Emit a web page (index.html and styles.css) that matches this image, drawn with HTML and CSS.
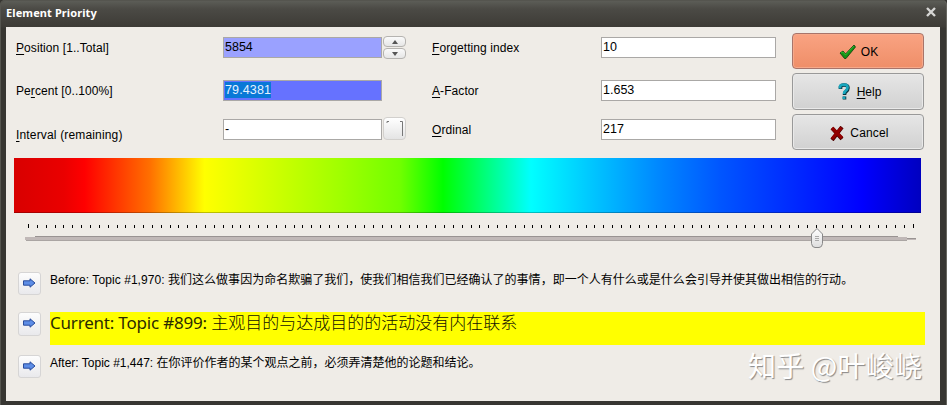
FILE: index.html
```html
<!DOCTYPE html>
<html lang="zh">
<head>
<meta charset="utf-8">
<title>Element Priority</title>
<link rel="stylesheet" href="styles.css">
</head>
<body>
<div class="window">
  <header class="titlebar">
    <span class="title">Element Priority</span>
    <svg class="close" width="12" height="12" viewBox="0 0 12 12"><path d="M2 2L10 10M10 2L2 10" stroke="#d6d6d4" stroke-width="2.4"/></svg>
  </header>
  <main class="content">
    <section class="form">
      <div class="column left">
        <div class="row"><label><u>P</u>osition [1..Total]</label><div class="field position">5854</div>
          <div class="spin"><span><svg width="8" height="4"><path d="M1 4L4 0L7 4Z" fill="#555"/></svg></span><span><svg width="8" height="4"><path d="M1 0L4 4L7 0Z" fill="#555"/></svg></span></div></div>
        <div class="row"><label>Pe<u>r</u>cent [0..100%]</label><div class="field percent"><mark>79.4381</mark></div></div>
        <div class="row"><label class="low"><u>I</u>nterval (remaining)</label><div class="field dash">-</div>
          <div class="pick"><svg width="24" height="24"><path d="M4 6V4.500H6M17 4.500H19.500V19" fill="none" stroke="#777"/></svg></div></div>
      </div>
      <div class="column right">
        <div class="row"><label><u>F</u>orgetting index</label><div class="field">10</div></div>
        <div class="row"><label><u>A</u>-Factor</label><div class="field">1.653</div></div>
        <div class="row"><label><u>O</u>rdinal</label><div class="field">217</div></div>
      </div>
      <div class="actions">
        <button class="btn ok"><svg width="17" height="16" viewBox="0 0 17 16"><path d="M1 9L4 7L6.500 10L15 1L16.500 3L7 14.500H5.500Z" fill="#159015" stroke="#0b3d0b" stroke-width=".8"/><path d="M2 8.800L4 8L6.500 11L15 2" fill="none" stroke="#2cba2c"/></svg><span>OK</span></button>
        <button class="btn help"><svg width="12" height="17" viewBox="0 0 12 17"><path d="M2.500 6V4Q3 2 6 2Q10 2 10 5Q10 7 8 8.500Q6.500 9.500 6.500 12M6.500 13.500V16.500" fill="none" stroke="#08333f" stroke-width="3.600"/><path d="M2 5.500V3.500Q2.500 1.700 6 1.700Q9.500 1.700 9.500 4.500Q9.500 6.500 7.500 8Q6 9 6 11M6 13.500V16" fill="none" stroke="#19a6bd" stroke-width="2.800"/></svg><span><u>H</u>elp</span></button>
        <button class="btn cancel"><svg width="14" height="15" viewBox="0 0 14 15"><path d="M2 2L12 13M12 1L2 14" stroke="#4d0000" stroke-width="4"/><path d="M2 2L12 12M11.500 1.500L2 13" stroke="#920000" stroke-width="3.200"/></svg><span>Cancel</span></button>
      </div>
    </section>
    <div class="spectrum"></div>
    <div class="slider">
      <svg width="907" height="28" viewBox="14 222 907 28">
        <defs><linearGradient id="thumb" x2="0" y2="1"><stop stop-color="#fff"/><stop offset="1" stop-color="#ddd"/></linearGradient></defs>
        <g shape-rendering="crispEdges">
          <path d="M28 226.500H914" stroke="#000" stroke-width="3" stroke-dasharray="1 7.850"/>
          <path d="M28 224h1v4h-1zM913 224h1v4h-1z"/>
          <path d="M25 237h10v-1h863v1h9v1h9v2h-9v1h-872v-1h-10z" fill="#c0b8b7"/>
          <path d="M35 236.500H898M907 238.500H916" stroke="#999392"/>
          <path d="M26 240.500H907" stroke="#aaa5a3"/>
        </g>
        <path d="M817 228.500L822.500 234V243.500Q822 247.500 819 247.500H815Q812 247.500 811.500 243.500V234Z" fill="url(#thumb)" stroke="#888"/>
        <path d="M815 236.500h4M815 238.500h4M815 240.500h4" stroke="#aaa"/>
      </svg>
    </div>
    <section class="topics">
      <div class="topic before"><button class="go"><svg class="arrow" width="13" height="10" viewBox="0 0 13 10"><path d="M.5 2.800H7V.8L12 5L7 9.200V7.200H.5Z" fill="#5d8de6" stroke="#294c9c"/></svg></button><p><span>Before: Topic #1,970:</span> <b class="cjk">我们这么做事因为命名欺骗了我们，使我们相信我们已经确认了的事情，即一个人有什么或是什么会引导并使其做出相信的行动。</b></p></div>
      <div class="topic current"><button class="go"><svg class="arrow" width="13" height="10" viewBox="0 0 13 10"><path d="M.5 2.800H7V.8L12 5L7 9.200V7.200H.5Z" fill="#5d8de6" stroke="#294c9c"/></svg></button><p><span>Current: Topic #899:</span> <b class="cjk">主观目的与达成目的的活动没有内在联系</b></p></div>
      <div class="topic after"><button class="go"><svg class="arrow" width="13" height="10" viewBox="0 0 13 10"><path d="M.5 2.800H7V.8L12 5L7 9.200V7.200H.5Z" fill="#5d8de6" stroke="#294c9c"/></svg></button><p><span>After: Topic #1,447:</span> <b class="cjk">在你评价作者的某个观点之前，必须弄清楚他的论题和结论。</b></p></div>
    </section>
    <div class="watermark">知乎 @叶峻峣</div>
  </main>
</div>
</body>
</html>
```

FILE: styles.css
```css
* { box-sizing: border-box; }
body { margin: 0; background: #373632; font: 12px/14px "Liberation Sans", "Noto Sans CJK SC", sans-serif; color: #000; }
.window { width: 947px; height: 405px; padding: 0 7px 4px 6px; border-radius: 5px 5px 0 0; background: linear-gradient(#5e5f59, #4b4a45 9px, #3d3b36 27px, #373632 28px); box-shadow: inset 1px 1px #55554f, inset -1px 0 #666660; overflow: hidden; }
.titlebar { height: 27px; display: flex; justify-content: space-between; padding: 5px 3px 0 0; }
.close { margin-top: 1px; }
.title { font: bold 11px/15px "Noto Sans", sans-serif; letter-spacing: .1px; color: #fff; }
.content { position: relative; height: 374px; background: #efece7; padding: 6px 15px 0 8px; }
.form { display: flex; height: 125px; padding-left: 2px; }
.column { display: grid; grid-template-rows: 43px 39px 30px; padding-top: 4px; align-content: start; }
.left { width: 416px; }
.right { width: 360px; }
.row { display: flex; align-items: flex-start; }
label { width: 207px; padding-top: 4px; white-space: nowrap; letter-spacing: .08px; }
.right label { width: 169px; }
label.low { padding-top: 9px; letter-spacing: .16px; }
u { text-underline-offset: 2px; text-decoration-thickness: 1px; text-decoration-skip-ink: none; }
.field { width: 159px; height: 21px; border: 1px solid #aaa8a6; background: #fff; font-size: 12.5px; line-height: 17px; padding: 1px; }
.right .field { width: 175px; }
.position { background: #9aa1ff; }
.percent { background: #6672ff; }
mark { display: block; width: fit-content; height: 16px; line-height: 17px; letter-spacing: .12px; background: #0878d7; color: #e4f2ff; }
.spin { width: 23px; display: grid; gap: 1px; margin: -1px 0 0 1px; }
.spin span { height: 11px; border: 1px solid #b5b3b0; border-radius: 4px; background: linear-gradient(#fafafa, #e6e6e6); display: flex; align-items: center; justify-content: center; }
.pick { width: 23px; height: 23px; margin: -2px 0 0 1px; border: 1px solid #d2d0cd; border-radius: 4px; background: linear-gradient(#fff, #e4e4e4); }
.pick svg { display: block; margin: -1px; }
.actions { display: grid; grid-template-rows: 36px 37px 36px; row-gap: 4px; align-content: start; width: 132px; }
.btn { width: 132px; display: flex; align-items: center; justify-content: center; gap: 5px; border: 1px solid #999; border-radius: 4px; background: linear-gradient(#e6e6e6, #d1d1d1); box-shadow: inset 0 0 0 1px #e9e9e9; font: 12px "Liberation Sans", sans-serif; color: #000; padding: 2px 0 0; }
.btn.ok { background: linear-gradient(#f9a382, #ef8e68); border-color: #a8746a; box-shadow: inset 0 0 0 1px #f6a98a; padding-left: 1px; }
.btn.help { gap: 7px; padding: 0 0 0 3px; }
.btn.cancel { gap: 6px; letter-spacing: .15px; padding-left: 3px; }
.spectrum { width: 907px; height: 55px; background: linear-gradient(to right, #d80000, #ea0000 5.5%, #ff0000 7.8%, #ff7000 15%, #ffff00 21%, #a0ff00 36%, #72ff00 42.500%, #00ff00 47.300%, #00ffff 57%, #0088ff 71%, #0055ff 78%, #0000ff 93.500%, #0000c0); border-bottom: 1px solid rgba(0,0,0,.25); }
.slider { height: 28px; margin-top: 9px; }
.slider svg { display: block; }
.topics { margin: 22px -4px 0 4px; padding-right: 4px; }
.topic { display: flex; }
.topic p { margin: 0 0 0 9px; flex: 1; white-space: nowrap; }
.topic span { letter-spacing: .07px; }
.go { width: 23px; height: 23px; padding: 0; border: 1px solid #d6d5d5; border-radius: 3px; background: linear-gradient(#fdfdfd, #e9e9ec); display: flex; align-items: center; justify-content: center; }
.go svg { margin-top: -2px; }
.cjk { font: 12px/14px "Noto Sans CJK SC", sans-serif; }
.before { height: 40px; }
.before .cjk { letter-spacing: .02px; }
.current { height: 43px; }
.current .go { height: 24px; }
.current p { height: 33px; background: #ff0; color: #2b2b00; font: 17px/20px "Noto Sans", sans-serif; }
.topic.current span { letter-spacing: -.2px; }
.current .cjk { font: 300 17px/20px "Noto Sans CJK SC", sans-serif; color: #111100; }
.after span { letter-spacing: 0; }
.watermark { position: absolute; left: 742px; top: 319px; font: 28px/38px "Noto Sans CJK SC", sans-serif; letter-spacing: .2px; color: #fff; text-shadow: 1px 1px 1px #888; white-space: nowrap; }
```
